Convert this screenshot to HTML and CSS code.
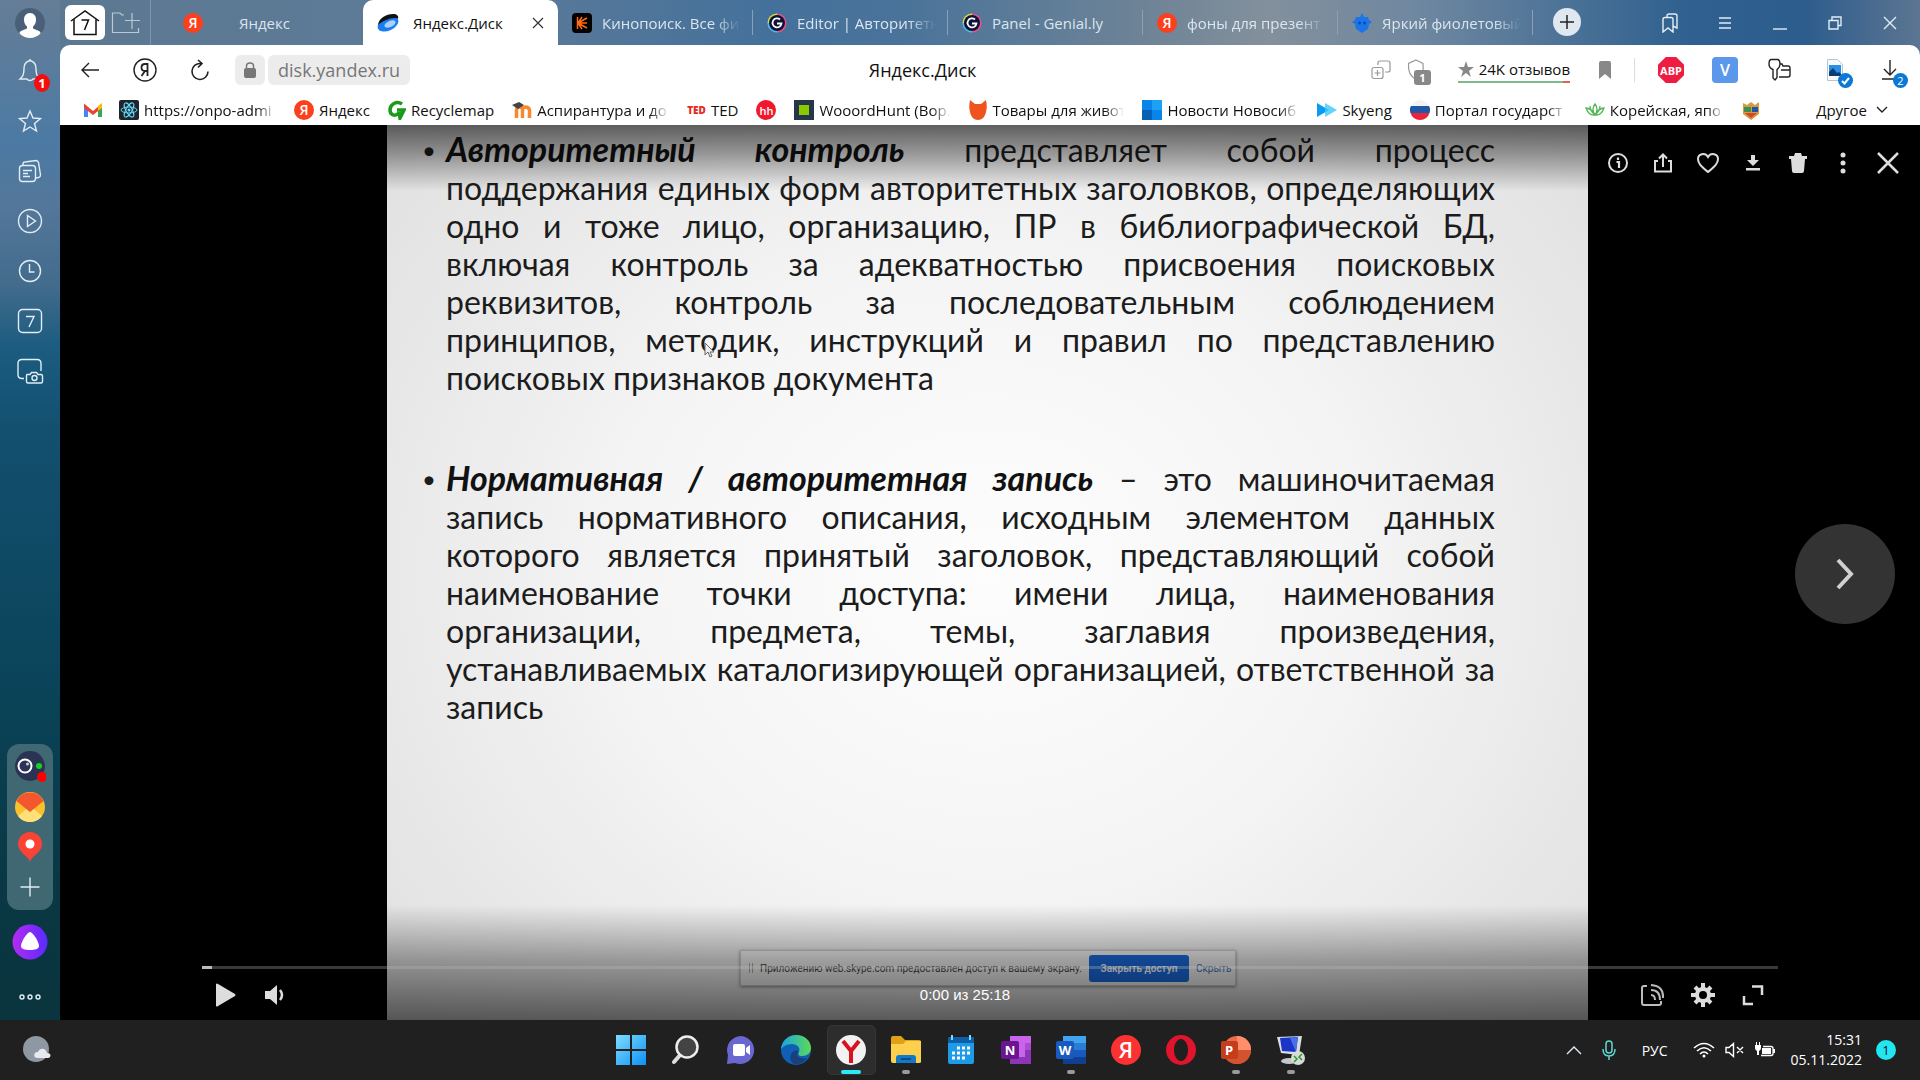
FILE: index.html
```html
<!DOCTYPE html>
<html lang="ru">
<head>
<meta charset="utf-8">
<title>Яндекс.Диск</title>
<link rel="stylesheet" href="styles.css">
</head>
<body>
<div class="browser">
  <aside class="sidebar">
    <button class="side-btn avatar" aria-label="Профиль"><svg width="30" height="30" viewBox="0 0 30 30"><circle cx="15" cy="15" r="15" fill="#4a6078"/><path d="M15 5c4 0 6 3 6 6.500 0 3-1 5.500-3 7v2l6 2.500c1 .5 1.500 1.500 1.500 2.500A15 15 0 0 1 15 30a15 15 0 0 1-10.500-4.500c0-1 .5-2 1.500-2.500l6-2.500v-2c-2-1.500-3-4-3-7C9 8 11 5 15 5z" fill="#fff"/></svg></button>
    <nav class="side-nav">
      <button class="side-btn" aria-label="Уведомления"><svg class="line" width="24" height="26" viewBox="0 0 24 26"><path d="M12 2.500c-4 1-6 4-6 8 0 6-1 8-4 10.500h7c1 2 5 2 6 0h7c-3-2.500-4-4.500-4-10.500 0-4-2-7-6-8zM12 1v2"/></svg><span class="badge red">1</span></button>
      <button class="side-btn" aria-label="Избранное"><svg class="line" width="24" height="24" viewBox="0 0 24 24"><path d="M12 2l3 7 7.500.5-6 5L18.500 22 12 18l-6.500 4 2-7.500-6-5L9 9z"/></svg></button>
      <button class="side-btn" aria-label="Коллекции"><svg class="line" width="24" height="24" viewBox="0 0 24 24"><rect x="1.500" y="6.500" width="16" height="16" rx="3"/><path d="M5 6V5q0-2 2-2l11-1.500q2 0 2.500 2L22.500 16q0 2-2 2.500l-3 .5M5 11.500h9M5 14.500h5M5 17.500h7"/></svg></button>
      <button class="side-btn" aria-label="Видео"><svg class="line" width="26" height="26" viewBox="0 0 26 26"><circle cx="13" cy="13" r="11.500"/><path d="M10.500 7.500v11l8-5.500z"/></svg></button>
      <button class="side-btn" aria-label="История"><svg class="line" width="24" height="24" viewBox="0 0 24 24"><circle cx="12" cy="12" r="10.500"/><path d="M11.500 5v8h5"/></svg></button>
      <button class="side-btn" aria-label="Вкладки"><svg class="line" width="26" height="26" viewBox="0 0 26 26"><rect x="1.500" y="1.500" width="23" height="23" rx="4"/><path d="M9 8.500h8l-5 10.500"/></svg></button>
      <button class="side-btn" aria-label="Скриншот"><svg class="line" width="28" height="26" viewBox="0 0 28 26"><path d="M8 20.500H6q-4 0-4-4V5.500q0-4 4-4h15q4 0 4 4V13M11 16.500h3l1.500-2h5l1.500 2h3q1.500 0 1.500 1.500v5.500q0 1.500-1.500 1.500H12q-1.500 0-1.500-1.500V18q0-1.500.5-1.500z"/><circle cx="18.500" cy="20" r="2.500"/></svg></button>
    </nav>
    <div class="side-apps">
      <button class="side-app" aria-label="Камера"><svg width="32" height="32" viewBox="0 0 32 32"><circle cx="16" cy="15" r="15" fill="#2b3355"/><circle cx="11" cy="15" r="6.500" fill="none" stroke="#fff" stroke-width="2"/><circle cx="13.500" cy="13" r="1.500" fill="#ccd"/><circle cx="25" cy="15" r="3" fill="#16d21c"/><circle cx="28" cy="26" r="5" fill="#f00"/></svg></button>
      <button class="side-app" aria-label="Почта"><svg width="30" height="30" viewBox="0 0 30 30"><circle cx="15" cy="15" r="15" fill="#fbc02e"/><path d="M3 24l12-10 12 10a15 15 0 0 1-24 0z" fill="#ffe07a"/><path d="M1.500 9a15 15 0 0 1 27 0L15 20z" fill="#f4572d"/></svg></button>
      <button class="side-app" aria-label="Карты"><svg width="26" height="32" viewBox="0 0 26 32"><path d="M13 31c-1-6-12-9-12-18a12 12 0 0 1 24 0c0 9-11 12-12 18z" fill="#fb4335"/><circle cx="13" cy="13" r="4.500" fill="#fff"/></svg></button>
      <button class="side-app" aria-label="Добавить"><svg class="line" width="20" height="20" viewBox="0 0 20 20"><path d="M10 .5v19M.5 10h19"/></svg></button>
    </div>
    <button class="side-btn alice" aria-label="Алиса"><svg width="36" height="36" viewBox="0 0 36 36"><defs><linearGradient id="al" x2="1"><stop stop-color="#b32bf2"/><stop offset="1" stop-color="#5a2bff"/></linearGradient></defs><circle cx="18" cy="18" r="17.500" fill="url(#al)"/><path d="M18 8c3 0 9 10 9 14 0 3-4 4-9 4s-9-1-9-4c0-4 6-14 9-14z" fill="#fff"/></svg></button>
    <button class="side-btn more" aria-label="Ещё"><svg class="line" width="24" height="8" viewBox="0 0 24 8"><circle cx="4" cy="4" r="2"/><circle cx="12" cy="4" r="2"/><circle cx="20" cy="4" r="2"/></svg></button>
  </aside>

  <main class="main">
    <header class="tabs">
      <div class="tab-tools">
        <button class="home" aria-label="Главная"><svg width="32" height="30" viewBox="0 0 32 30" fill="none" stroke="#111" stroke-width="1.500"><path d="M2 13L16 3l14 10M5 11v15.500h22V11"/><path d="M12.500 12h7l-4 10"/></svg></button>
        <button class="folder" aria-label="Группа вкладок"><svg width="30" height="24" viewBox="0 0 30 24" fill="none" stroke="#b9c9d8" stroke-width="1.200"><path d="M13 4H11L9 2H1.500v19.500h26V17M21 2v16M14 9.500h15"/></svg></button>
      </div>
      <button class="tab first"><span class="ya">Я</span><span class="tab-text">Яндекс</span></button>
      <div class="tab active"><svg width="22" height="18" viewBox="0 0 22 18"><ellipse cx="11" cy="10" rx="11" ry="6.500" transform="rotate(-25 11 10)" fill="#1a7cf0"/><path d="M1 11C2 4 9 0 16 0c4 0 6 2 5 5-1-2-8-1-12 1-3 1-6 3-8 5z" fill="#111"/><ellipse cx="13" cy="10" rx="6" ry="3" transform="rotate(-25 13 10)" fill="#a6d2ff"/></svg><span class="tab-text">Яндекс.Диск</span><button class="close" aria-label="Закрыть вкладку"><svg width="12" height="12" viewBox="0 0 12 12" stroke="#333" stroke-width="1.200"><path d="M1 1l10 10M11 1L1 11"/></svg></button></div>
      <button class="tab"><svg width="20" height="20" viewBox="0 0 20 20"><rect width="20" height="20" rx="4" fill="#000"/><path d="M5.500 4v12M6 10l9-5M6 10h9M6 10l9 5M6 10l4-6M6 10l4 6" stroke="#ff6a13" stroke-width="1.500"/></svg><span class="tab-text fade">Кинопоиск. Все фи</span></button>
      <button class="tab"><svg width="20" height="20" viewBox="0 0 20 20"><use href="#genially"/></svg><span class="tab-text fade">Editor | Авторитетн</span></button>
      <button class="tab"><svg width="20" height="20" viewBox="0 0 20 20"><use href="#genially"/></svg><span class="tab-text">Panel - Genial.ly</span></button>
      <button class="tab"><span class="ya">Я</span><span class="tab-text fade">фоны для презент</span></button>
      <button class="tab"><svg width="20" height="20" viewBox="0 0 20 20"><path d="M10 0l2 4h4l1 3 3 2-3 2-1 5-6 4-6-4-1-5-3-2 3-2 1-3h4z" fill="#1b74e8"/><circle cx="7.500" cy="10" r="1.500" fill="#0b4aa8"/><circle cx="12.500" cy="10" r="1.500" fill="#0b4aa8"/></svg><span class="tab-text fade">Яркий фиолетовый</span></button>
      <button class="new-tab" aria-label="Новая вкладка"><svg width="14" height="14" viewBox="0 0 14 14" stroke="#222" stroke-width="1.500"><path d="M7 0v14M0 7h14"/></svg></button>
      <div class="win">
        <button aria-label="Закладки"><svg class="line" width="20" height="20" viewBox="0 0 20 20"><path d="M3 6.500q0-2 2-2h6q2 0 2 2V19l-5-4-5 4zM7 4V3q0-2 2-2h6q2 0 2 2v12l-4-2"/></svg></button>
        <button aria-label="Меню"><svg class="line" width="14" height="12" viewBox="0 0 14 12"><path d="M1 1h12M1 6h12M1 11h12"/></svg></button>
        <button aria-label="Свернуть"><svg class="line" width="14" height="14" viewBox="0 0 14 14"><path d="M0 13h14"/></svg></button>
        <button aria-label="Развернуть"><svg class="line" width="14" height="14" viewBox="0 0 14 14"><path d="M1 4.500h9V13H1zM4 4.500V1h9v8.500h-3"/></svg></button>
        <button aria-label="Закрыть"><svg class="line" width="14" height="14" viewBox="0 0 14 14"><path d="M1 1l12 12M13 1L1 13"/></svg></button>
      </div>
    </header>

    <div class="chrome">
      <div class="toolbar">
        <div class="nav">
          <button aria-label="Назад"><svg class="ink" width="18" height="16" viewBox="0 0 18 16"><path d="M18 8H1M8 1L1 8l7 7"/></svg></button>
          <button aria-label="Яндекс"><svg class="ink" width="24" height="24" viewBox="0 0 24 24"><circle cx="12" cy="12" r="11"/><path d="M14.500 18V6h-2.500c-2.500 0-3.500 1.500-3.500 3.500S10 13 12 13h2.500M12 13l-3.500 5" stroke-width="1.800"/></svg></button>
          <button aria-label="Обновить"><svg class="ink" width="20" height="22" viewBox="0 0 20 22"><path d="M11 4.500a8 8 0 1 0 7 8M8 1l4 3.500L8 8.500" stroke-width="1.600"/></svg></button>
          <div class="address"><button class="lock" aria-label="Защищено"><svg width="12" height="16" viewBox="0 0 12 16"><rect y="6" width="12" height="10" rx="2" fill="#777"/><path d="M2.500 7V4q0-3 3.500-3t3.500 3v3" fill="none" stroke="#777" stroke-width="1.500"/></svg></button><button class="url">disk.yandex.ru</button></div>
        </div>
        <h1 class="page-title">Яндекс.Диск</h1>
        <div class="tools">
          <button class="t1" aria-label="Дублировать"><svg width="20" height="20" viewBox="0 0 20 20" fill="none" stroke="#999" stroke-width="1.200"><rect x="1" y="7.500" width="11" height="11" rx="2"/><path d="M7 5V3q0-2 2-2h8q2 0 2 2v7q0 2-2 2h-3M6.500 10v6M3.500 13h6"/></svg></button>
          <button class="t2" aria-label="Защита"><svg width="24" height="26" viewBox="0 0 24 26"><path d="M9 1l7 3.500c1 7-1 13-7 16C3 17.500 1 11.500 1.500 4.500z" fill="none" stroke="#999" stroke-width="1.200"/><rect x="7" y="11" width="17" height="15" rx="3" fill="#888"/></svg><span class="shield-count">1</span></button>
          <button class="reviews"><svg width="16" height="16" viewBox="0 0 16 16"><path d="M8 0l2 6h6l-5 4 2 6-5-4-5 4 2-6-5-4h6z" fill="#888"/></svg>24K отзывов</button>
          <button class="t3" aria-label="В закладки"><svg width="12" height="18" viewBox="0 0 12 18"><path d="M0 2q0-2 2-2h8q2 0 2 2v16l-6-5-6 5z" fill="#888"/></svg></button>
          <span class="divider"></span>
          <button class="ext abp">ABP</button>
          <button class="ext vbtn">V</button>
          <button class="ext" aria-label="Пароли"><svg class="ink" width="24" height="24" viewBox="0 0 24 24"><path d="M3 1.500h7q2 1 2 4.500t-3 5.500v8L7 22l-2-2v-8.500Q1 10 1 6t2-4.500zM12 6h2l1 2h5q2 0 2 2v7q0 2-2 2h-9M13 12h9"/></svg></button>
          <button class="ext" aria-label="Изображение"><svg width="16" height="22" viewBox="0 0 16 22"><path d="M.5.5h10l5 5v16H.5z" fill="#f7f9fb" stroke="#b9c4cf"/><rect x="2" y="6" width="12" height="11" fill="#2c8fe6"/><path d="M2 17v-4l4-4 4 5 2-1 2 2v2z" fill="#0a3b73"/></svg><span class="badge blue"><svg width="9" height="8" viewBox="0 0 9 8" fill="none" stroke="#fff" stroke-width="2"><path d="M1 4l2.500 2.500L8 1"/></svg></span></button>
          <button class="ext" aria-label="Загрузки"><svg class="ink" width="18" height="20" viewBox="0 0 18 20"><path d="M9 0v15M3 9l6 6 6-6M1 19h12"/></svg><span class="badge blue">2</span></button>
        </div>
      </div>
      <nav class="bookmarks">
        <a href="#" aria-label="Gmail" class="gm"><svg width="20" height="16" viewBox="0 0 20 16"><path d="M1 2v13h4V6z" fill="#4285f4"/><path d="M19 2v13h-4V6z" fill="#34a853"/><path d="M1 1.500L10 9l9-7.500V6l-9 7-9-7z" fill="#ea4335"/><path d="M15 4l4-3v5l-4 3z" fill="#fbbc04"/></svg></a>
        <a href="#"><svg width="20" height="20" viewBox="0 0 20 20"><rect width="20" height="20" rx="2" fill="#20232a"/><g fill="none" stroke="#61dafb"><ellipse cx="10" cy="10" rx="8" ry="3"/><ellipse cx="10" cy="10" rx="8" ry="3" transform="rotate(60 10 10)"/><ellipse cx="10" cy="10" rx="8" ry="3" transform="rotate(120 10 10)"/></g><circle cx="10" cy="10" r="1.500" fill="#61dafb"/></svg><span class="bm-long">https://onpo-admi</span></a>
        <a href="#"><span class="ya">Я</span><span>Яндекс</span></a>
        <a href="#"><svg width="18" height="20" viewBox="0 0 18 20"><path d="M14 4C8 0 2 5 2 10c0 5 5 7 9 3M9 10h7l-4 8-1-6" fill="none" stroke="#1a9a1a" stroke-width="3.500"/></svg><span>Recyclemap</span></a>
        <a href="#"><svg width="20" height="18" viewBox="0 0 20 18"><path d="M4.500 17V9q0-3 3-3t3 3v8M10.500 9q0-3 3-3t4 3v8" fill="none" stroke="#f7882f" stroke-width="3.500"/><path d="M0 4l7-3 5 3-6 4z" fill="#444"/></svg><span class="bm-long">Аспирантура и до</span></a>
        <a href="#"><b class="ted">TED</b><span>TED</span></a>
        <a href="#" class="hh">hh</a>
        <a href="#"><svg width="20" height="20" viewBox="0 0 20 20"><rect width="20" height="20" fill="#26364a"/><rect x="5" y="5" width="10" height="10" fill="#8cc800"/></svg><span class="bm-long">WooordHunt (Вор.</span></a>
        <a href="#"><svg width="18" height="20" viewBox="0 0 18 20"><path d="M1 0l5 4h6l5-4c1 5 1 8 0 12-1 5-4 8-8 8s-7-3-8-8C0 8 0 5 1 0z" fill="#f0541e"/></svg><span class="bm-long">Товары для живот</span></a>
        <a href="#"><svg width="20" height="20" viewBox="0 0 20 20"><path d="M0 0h20v20H0z" fill="#0a84e8"/><path d="M10 0h10v10H10z" fill="#1ba1f5"/><path d="M0 10h10v10H0z" fill="#0560b6"/></svg><span class="bm-long">Новости Новосиб</span></a>
        <a href="#"><svg width="20" height="14" viewBox="0 0 20 14"><path d="M0 0l12 7-12 7z" fill="#0a9cf5"/><path d="M8 0l12 7-12 7z" fill="#3cc8f8" opacity=".8"/></svg><span>Skyeng</span></a>
        <a href="#"><svg width="20" height="20" viewBox="0 0 20 20"><circle cx="10" cy="10" r="10" fill="#f2f2f2"/><path d="M1 6h18q2 3 .5 7H.5Q-1 9 1 6z" fill="#2257a8"/><path d="M.5 13h19a10 10 0 0 1-19 0z" fill="#e6263a"/></svg><span class="bm-long">Портал государст</span></a>
        <a href="#"><svg width="20" height="14" viewBox="0 0 20 14" fill="none" stroke="#53b454" stroke-width="1.300"><path d="M10 1q4 5 0 11Q6 6 10 1zM10 12Q4 13 1 5q5 0 9 7zM10 12q6 1 9-7-5 0-9 7zM10 12Q5 8 5 3M10 12q5-4 5-9"/></svg><span class="bm-mid">Корейская, япо</span></a>
        <a href="#" aria-label="Герб"><svg width="18" height="20" viewBox="0 0 18 20"><path d="M1 3l4 2 4-3 4 3 4-3v12l-8 6-8-6z" fill="#d79a3c"/><path d="M2 7h7v5H2z" fill="#3d8e50"/><path d="M10 7h6v5h-6z" fill="#2257a8"/><path d="M3 13h12l-6 5z" fill="#d6452f"/></svg></a>
        <button class="other">Другое<svg class="ink" width="12" height="8" viewBox="0 0 12 8"><path d="M1 1l5 5 5-5"/></svg></button>
      </nav>
    </div>

    <section class="viewer">
      <article class="slide">
        <ul class="points">
          <li>
            <span class="ln"><b>Авторитетный контроль</b> представляет собой процесс</span>
            <span class="ln">поддержания единых форм авторитетных заголовков, определяющих</span>
            <span class="ln">одно и тоже лицо, организацию, ПР в библиографической БД,</span>
            <span class="ln">включая контроль за адекватностью присвоения поисковых</span>
            <span class="ln">реквизитов, контроль за последовательным соблюдением</span>
            <span class="ln">принципов, методик, инструкций и правил по представлению</span>
            <span class="ln last">поисковых признаков документа</span>
          </li>
          <li>
            <span class="ln"><b>Нормативная / авторитетная запись</b> – это машиночитаемая</span>
            <span class="ln">запись нормативного описания, исходным элементом данных</span>
            <span class="ln">которого является принятый заголовок, представляющий собой</span>
            <span class="ln">наименование точки доступа: имени лица, наименования</span>
            <span class="ln">организации, предмета, темы, заглавия произведения,</span>
            <span class="ln">устанавливаемых каталогизирующей организацией, ответственной за</span>
            <span class="ln last">запись</span>
          </li>
        </ul>
        <div class="share"><span class="grip"></span><span class="share-text">Приложению web.skype.com предоставлен доступ к вашему экрану.</span><button class="stop">Закрыть доступ</button><a href="#">Скрыть</a></div>
        <svg class="cursor" width="10" height="16" viewBox="0 0 10 16"><path d="M1 1v12l3-3 2 5 2-1-2-4h4z" fill="#eee" stroke="#666"/></svg>
      </article>
      <div class="shade"></div>
      <div class="actions">
        <button aria-label="Информация"><svg width="22" height="22" viewBox="0 0 22 22"><circle cx="11" cy="11" r="9" fill="none" stroke="#ddd" stroke-width="2"/><path d="M9.500 10H12v6M11 5.500v2.500" fill="none" stroke="#ddd" stroke-width="2.200"/></svg></button>
        <button aria-label="Поделиться"><svg width="22" height="22" viewBox="0 0 22 22" fill="none" stroke="#ddd" stroke-width="2"><path d="M6 9H3v10.500h16V9h-3M11 15V3M7 6.500l4-4 4 4"/></svg></button>
        <button aria-label="Нравится"><svg width="24" height="22" viewBox="0 0 24 22" fill="none" stroke="#ddd" stroke-width="2"><path d="M12 20C6 15 2 12 2 7c0-5 7-7 10-2 3-5 10-3 10 2 0 5-4 8-10 13z"/></svg></button>
        <button aria-label="Скачать"><svg width="16" height="18" viewBox="0 0 16 18" fill="#ddd"><path d="M6 1h4v5h4l-6 6-6-6h4zM1 14h14v2.500H1z"/></svg></button>
        <button aria-label="Удалить"><svg width="20" height="22" viewBox="0 0 20 22" fill="#ddd"><path d="M1 4h5l1-3h6l1 3h5v3h-2l-1 12q0 2-2 2H6q-2 0-2-2L3 7H1z"/></svg></button>
        <button aria-label="Ещё"><svg width="6" height="22" viewBox="0 0 6 22" fill="#ddd"><circle cx="3" cy="3" r="2.500"/><circle cx="3" cy="11" r="2.500"/><circle cx="3" cy="19" r="2.500"/></svg></button>
        <button aria-label="Закрыть"><svg width="22" height="22" viewBox="0 0 22 22" stroke="#ddd" stroke-width="2.500"><path d="M1 1l20 20M21 1L1 21"/></svg></button>
      </div>
      <button class="next" aria-label="Следующий"><svg width="20" height="32" viewBox="0 0 20 32" fill="none" stroke="#d0d0d0" stroke-width="4"><path d="M3 2l13 14L3 30"/></svg></button>
      <div class="player">
        <div class="progress"><div class="played"></div></div>
        <div class="controls">
          <div class="left">
            <button aria-label="Играть"><svg width="20" height="24" viewBox="0 0 20 24"><path d="M0 1q1-1 2 0l17 10q1 1 0 2L2 23q-1 1-2 0z" fill="#ddd"/></svg></button>
            <button aria-label="Звук"><svg width="20" height="20" viewBox="0 0 20 20"><path d="M0 6h5l7-6v20l-7-6H0z" fill="#ddd"/><path d="M15 5q4 5 0 10" fill="none" stroke="#ddd" stroke-width="2.500"/></svg></button>
          </div>
          <time>0:00 из 25:18</time>
          <div class="right">
            <button aria-label="Трансляция"><svg width="24" height="24" viewBox="0 0 24 24" fill="none" stroke="#bbb" stroke-width="2"><path d="M7 3H4q-2 0-2 2v15q0 2 2 2h15q2 0 2-2v-2M11 12q4 0 4 5M11 7q9 0 9 10M11 2q13 1 12 13"/></svg></button>
            <button aria-label="Настройки"><svg width="24" height="24" viewBox="0 0 24 24" fill="none" stroke="#ddd"><circle cx="12" cy="12" r="6" stroke-width="4"/><g stroke-width="4"><path d="M12 0v5M12 19v5M0 12h5M19 12h5M4 4l3.500 3.500M16.500 16.500L20 20M20 4l-3.500 3.500M4 20l3.500-3.500"/></g></svg></button>
            <button aria-label="Во весь экран"><svg width="22" height="22" viewBox="0 0 22 22" fill="none" stroke="#ddd" stroke-width="2.500"><path d="M10 2.500h10V11M2 12v8h9"/></svg></button>
          </div>
        </div>
      </div>
    </section>
  </main>
</div>

<footer class="taskbar">
  <button class="weather" aria-label="Погода"><svg width="30" height="28" viewBox="0 0 30 28"><circle cx="14" cy="13" r="13" fill="#8e98a2"/><path d="M16 22c-6 0-4-7 0-6 2-5 8-4 9 1 5 0 4 5 1 5z" fill="#e6eaee"/></svg></button>
  <div class="apps">
    <button aria-label="Пуск"><svg width="30" height="30" viewBox="0 0 30 30"><defs><linearGradient id="wn" x2="1" y2="1"><stop stop-color="#7fdcff"/><stop offset="1" stop-color="#0c92f5"/></linearGradient></defs><path d="M0 0h14v14H0zM16 0h14v14H16zM0 16h14v14H0zM16 16h14v14H16z" fill="url(#wn)"/></svg></button>
    <button aria-label="Поиск"><svg width="28" height="30" viewBox="0 0 28 30"><path d="M9 19l-7 8" stroke="#ddd" stroke-width="4" stroke-linecap="round"/><circle cx="15" cy="12" r="10.500" fill="#444" stroke="#eee" stroke-width="2.500"/></svg></button>
    <button aria-label="Чат"><svg width="30" height="30" viewBox="0 0 30 30"><path d="M15 1a14 14 0 1 1-6 27l-8 1 1-9A14 14 0 0 1 15 1z" fill="#6a67d0"/><rect x="7" y="9" width="12" height="12" rx="2" fill="#fff"/><path d="M20 13l4-3v10l-4-3z" fill="#fff"/></svg></button>
    <button aria-label="Edge"><svg width="30" height="30" viewBox="0 0 30 30"><defs><linearGradient id="ed" x2="1"><stop stop-color="#18a5e0"/><stop offset="1" stop-color="#5fd957"/></linearGradient></defs><circle cx="15" cy="15" r="15" fill="#0f60b5"/><path d="M0 14C1 5 8 0 15 0c9 0 15 6 15 13 0 5-4 8-9 8-4 0-4-2-3-4 2-4-2-8-7-8-6 0-9 3-11 5z" fill="url(#ed)"/><path d="M17 17c-2 4 1 7 9 6-3 5-9 7-13 6-5-3-5-10 0-13 3-1 4-1 4 1z" fill="#1b3f7d"/></svg></button>
    <button class="current" aria-label="Яндекс Браузер"><svg width="30" height="30" viewBox="0 0 30 30"><circle cx="15" cy="15" r="15" fill="#f2f2f2"/><path d="M7 6l8 10 8-10M15 15v13" fill="none" stroke="#d8121f" stroke-width="4"/></svg></button>
    <button class="open" aria-label="Проводник"><svg width="30" height="28" viewBox="0 0 30 28"><path d="M0 2q0-2 2-2h8l4 4h14q2 0 2 2v8H0z" fill="#e0a018"/><path d="M0 8h12l3-3h15v21q0 1-2 1H2q-2 0-2-2z" fill="#fcd04c"/><path d="M5 27v-5q0-3 3-3h14q3 0 3 3v5z" fill="#1378c8"/><path d="M10 23h10" stroke="#0a4c8c" stroke-width="2"/></svg></button>
    <button aria-label="Календарь"><svg width="26" height="30" viewBox="0 0 26 30"><rect y="2" width="26" height="27" rx="2" fill="#1b9be8"/><path d="M0 4q0-2 2-2h22q2 0 2 2v4H0z" fill="#0d5fa8"/><path d="M4 0v5M22 0v5" stroke="#7fd8ff" stroke-width="2"/><path d="M9 13h14M4 18h19M4 23h14" stroke="#fff" stroke-width="3" stroke-dasharray="3 2"/></svg></button>
    <button aria-label="OneNote"><svg width="30" height="28" viewBox="0 0 30 28"><path d="M9 0h21v28H9z" fill="#ca64ea"/><path d="M24 7h6v7h-6z" fill="#ae4bd5"/><path d="M24 14h6v14H9v-7h15z" fill="#8d35b5"/><rect y="5" width="18" height="18" rx="2" fill="#6a1692"/><text x="9" y="19" class="glyph">N</text></svg></button>
    <button class="open" aria-label="Word"><svg width="30" height="28" viewBox="0 0 30 28"><path d="M7 0h23v28H7z" fill="#41a5ee"/><path d="M7 7h23v7H7z" fill="#2b7cd3"/><path d="M7 14h23v7H7z" fill="#185abd"/><path d="M7 21h23v7H7z" fill="#103f91"/><rect y="5" width="18" height="18" rx="2" fill="#185abd"/><text x="9" y="19" class="glyph">W</text></svg></button>
    <button aria-label="Яндекс"><svg width="30" height="30" viewBox="0 0 30 30"><circle cx="15" cy="15" r="15" fill="#fc3232"/><text x="15" y="23" class="glyph big">Я</text></svg></button>
    <button aria-label="Opera"><svg width="30" height="30" viewBox="0 0 30 30"><path fill-rule="evenodd" d="M15 0a15 15 0 1 0 0 30 15 15 0 0 0 0-30zm0 4c4 0 7 5 7 11s-3 11-7 11-7-5-7-11 3-11 7-11z" fill="#e0142c"/></svg></button>
    <button class="open" aria-label="PowerPoint"><svg width="30" height="30" viewBox="0 0 30 30"><circle cx="16" cy="15" r="14" fill="#ed6c47"/><path d="M16 1a14 14 0 0 1 14 14H16z" fill="#ff8f6b"/><path d="M2 15h28a14 14 0 0 1-28 0z" fill="#d35230"/><rect y="6" width="17" height="18" rx="2" fill="#c43e1c"/><text x="8" y="20" class="glyph">P</text></svg></button>
    <button class="open" aria-label="Удалённый рабочий стол"><svg width="30" height="30" viewBox="0 0 30 30"><path d="M1 2l25-1-3 19-18-2z" fill="#d8dde4"/><path d="M4 3l18-1-2 15-14-1z" fill="#1a35c8"/><path d="M14 3l8-1-2 15z" fill="#4a70e8"/><ellipse cx="13" cy="26" rx="8" ry="3" fill="#c4c8ce"/><circle cx="22" cy="23" r="7" fill="#d8dcd8"/><path d="M18 21l3 3-3 3M26 19l-3 3 3 3" fill="none" stroke="#2a9a2a" stroke-width="1.500"/></svg></button>
  </div>
  <div class="tray">
    <button class="up" aria-label="Скрытые значки"><svg class="line" width="16" height="10" viewBox="0 0 16 10"><path d="M1 9l7-7 7 7"/></svg></button>
    <button class="mic" aria-label="Микрофон"><svg width="14" height="20" viewBox="0 0 14 20" fill="none" stroke="#5fd6d0" stroke-width="1.500"><rect x="4" y="1" width="6" height="12" rx="3"/><path d="M1 9q0 7 6 7t6-7M7 16v4"/></svg></button>
    <button class="lang">РУС</button>
    <button class="status" aria-label="Сеть, звук, батарея">
      <svg width="22" height="16" viewBox="0 0 22 16" fill="none" stroke="#fff" stroke-width="1.600"><path d="M1 6q10-9 20 0M4 9q7-6.500 14 0M7 12q4-4 8 0"/><circle cx="11" cy="14" r="1.500" fill="#fff" stroke="none"/></svg>
      <svg width="20" height="16" viewBox="0 0 20 16" fill="none" stroke="#fff" stroke-width="1.400"><path d="M1 5.500h3l4.500-4v13l-4.500-4H1zM12 5l6 6M18 5l-6 6"/></svg>
      <svg width="20" height="16" viewBox="0 0 20 16"><path d="M8 4.500h8q2 0 2 2v5q0 2-2 2H6" fill="none" stroke="#fff" stroke-width="1.300"/><rect x="7" y="6" width="9" height="6" fill="#fff"/><path d="M18 7h2v4h-2zM0 3h6v3q0 2-2 3v4H2V9Q0 8 0 6zM1 0h1v3H1zM4 0h1v3H4z" fill="#fff"/></svg>
    </button>
    <button class="clock"><span>15:31</span><span>05.11.2022</span></button>
    <span class="count">1</span>
  </div>
</footer>

<svg class="defs" width="0" height="0"><symbol id="genially" viewBox="0 0 20 20"><circle cx="10" cy="10" r="9.500" fill="#f0518c"/><path d="M10 .5a9.500 9.500 0 0 0-9.500 9.500H10z" fill="#c9e24a"/><path d="M.5 10a9.500 9.500 0 0 0 9.500 9.500V10z" fill="#3fc3f0"/><circle cx="10" cy="10" r="8" fill="#0e1238"/><path d="M13 6.500a4.500 4.500 0 1 0 1.500 4H10" fill="none" stroke="#fff" stroke-width="1.800"/></symbol></svg>
</body>
</html>
```
FILE: styles.css
```css
* { box-sizing: border-box; }
body {
  margin: 0;
  height: 100vh;
  display: flex;
  flex-direction: column;
  overflow: hidden;
  font-family: "Open Sans", "Noto Sans", sans-serif;
  font-size: 14px;
  color: #111;
}
button {
  border: 0;
  padding: 0;
  background: none;
  font: inherit;
  color: inherit;
  display: flex;
  align-items: center;
  justify-content: center;
}
a { color: inherit; text-decoration: none; }
svg { display: block; flex: none; }
.line { fill: none; stroke: #e2edf5; stroke-width: 1.4; }
.ink { fill: none; stroke: #222; stroke-width: 1.4; }
.defs { position: absolute; }

.browser {
  flex: 1;
  min-height: 0;
  display: flex;
  background: linear-gradient(90deg, #5c7890 0, #5d7a98 25%, #44719b 40%, #4a739a 47%, #6f8496 60%, #83909c 66%, #6e87a0 74%, #2f608f 88%, #2d5d8c 94%, #5c7592 100%);
}

/* Side panel */
.sidebar {
  width: 60px;
  flex: none;
  display: flex;
  flex-direction: column;
  align-items: center;
  background: linear-gradient(#667d96 0, #5b7c9c 6%, #4b7aa4 14%, #54779a 20%, #426b8c 28%, #1b5c80 34%, #135070 42%, #0a4358 68%, #093844 86%, #0a343e 100%);
}
.side-btn { position: relative; width: 48px; height: 50px; flex: none; }
.avatar { height: 46px; }
.side-apps {
  margin-top: auto;
  width: 46px;
  padding: 3px 0;
  border-radius: 12px;
  background: #3f6873;
  display: flex;
  flex-direction: column;
  align-items: center;
}
.side-app { width: 46px; height: 40px; }
.alice { height: 64px; }
.more { height: 46px; }
.badge {
  position: absolute;
  display: flex;
  align-items: center;
  justify-content: center;
  border-radius: 50%;
  color: #fff;
  font-size: 11px;
  line-height: 1;
}
.badge.red { width: 16px; height: 18px; right: 4px; bottom: 4px; background: #f60d0d; font-weight: 700; font-size: 13px; }
.badge.blue { width: 15px; height: 15px; background: #0a78d4; }

/* Tabs */
.main { flex: 1; min-width: 0; display: flex; flex-direction: column; }
.tabs { height: 45px; flex: none; display: flex; align-items: stretch; }
.tab-tools { width: 91px; flex: none; display: flex; align-items: center; padding: 0 0 0 5px; gap: 6px; border-right: 1px solid #7d94aa; }
.home { width: 40px; height: 35px; border-radius: 6px; background: #fff; }
.tab {
  flex: 0 1 195px;
  min-width: 0;
  display: flex;
  align-items: center;
  justify-content: flex-start;
  gap: 10px;
  padding: 0 12px 0 14px;
  color: #dbe5ee;
  font-size: 15px;
  position: relative;
}
.tab + .tab:not(.active)::after {
  content: "";
  position: absolute;
  right: 0;
  top: 10px;
  height: 25px;
  border-right: 1px solid #8ba0b3;
}
.tab.first { flex-basis: 212px; padding-left: 32px; gap: 36px; }
.tab.active { background: #fff; color: #111; border-radius: 10px 10px 0 0; gap: 14px; }
.close { margin-left: auto; width: 16px; height: 16px; }
.tab-text { white-space: nowrap; overflow: hidden; }
.fade { flex: 1; text-align: left; -webkit-mask-image: linear-gradient(90deg, #000 80%, transparent); mask-image: linear-gradient(90deg, #000 80%, transparent); }
.ya {
  width: 20px;
  height: 20px;
  flex: none;
  border-radius: 50%;
  background: #fc3f1d;
  color: #fff;
  font-size: 14px;
  font-weight: 600;
  line-height: 20px;
  text-align: center;
}
.new-tab { width: 28px; height: 28px; margin: 8px 0 0 20px; border-radius: 50%; background: #dfe7ef; flex: none; }
.win { margin-left: auto; padding-right: 3px; display: flex; }
.win button { width: 55px; }

/* Address bar and bookmarks */
.chrome { background: #fff; border-radius: 10px 10px 0 0; flex: none; }
.toolbar { height: 50px; display: grid; grid-template-columns: 6fr auto 7fr; align-items: center; }
.nav { display: flex; align-items: center; padding-left: 2px; }
.nav > button { width: 55px; height: 40px; }
.address { display: flex; gap: 3px; margin-left: 8px; }
.address button { height: 30px; border-radius: 6px; background: #ececec; }
.lock { width: 30px; }
.address .url { padding: 0 10px; font-size: 18px; color: #777; }
.page-title { margin: 0; font-size: 18px; font-weight: 400; }
.tools { display: flex; align-items: center; justify-content: flex-end; padding-right: 3px; }
.tools button { height: 40px; }
.t1 { width: 38px; }
.t2 { width: 38px; position: relative; }
.t2 svg { margin-top: 4px; }
.shield-count { position: absolute; right: 12px; bottom: 5px; color: #fff; font-size: 11px; line-height: 15px; font-weight: 700; }
.tools .reviews {
  height: 26px;
  margin: 0 20px 0 20px;
  gap: 5px;
  font-size: 15px;
  white-space: nowrap;
  border-bottom: 2px solid;
  border-image: linear-gradient(90deg, #7fb98a 93%, #e0605a 93%) 1;
}
.t3 { width: 30px; }
.divider { width: 1px; height: 24px; margin: 0 23px 0 14px; background: #ddd; }
.ext { width: 55px; position: relative; }
.ext .badge { right: 9px; bottom: 2px; }
.tools .abp, .tools .vbtn { width: 26px; height: 26px; margin-right: 14px; color: #fff; font-weight: 700; }
.tools .abp { background: #ed1c40; font-size: 11px; clip-path: polygon(30% 0, 70% 0, 100% 30%, 100% 70%, 70% 100%, 30% 100%, 0 70%, 0 30%); }
.tools .vbtn { margin-left: 14px; background: #5b97ea; border-radius: 4px; font-size: 16px; font-weight: 600; }
.bookmarks { height: 30px; display: flex; align-items: center; gap: 18px; padding: 0 32px 0 23px; font-size: 15px; }
.bookmarks a { display: flex; align-items: center; gap: 5px; white-space: nowrap; flex: none; }
.bm-long, .bm-mid { width: 132px; overflow: hidden; -webkit-mask-image: linear-gradient(90deg, #000 85%, transparent); mask-image: linear-gradient(90deg, #000 85%, transparent); }
.bm-mid { width: 114px; }
.gm { margin-right: -2px; }
.ted { color: #e62b1e; font-size: 10px; font-weight: 800; }
.bookmarks .hh { width: 20px; height: 20px; border-radius: 50%; background: #f1182c; color: #fff; font-size: 11px; font-weight: 600; justify-content: center; }
.other { margin-left: auto; gap: 9px; }

/* Video viewer */
.viewer { flex: 1; min-height: 0; position: relative; background: #000; display: flex; justify-content: center; padding-right: 5px; }
.slide {
  position: relative;
  width: 1201px;
  background: radial-gradient(ellipse 65% 75% at 50% 50%, #fdfdfd 0, #f5f5f5 45%, #e0e0e0 100%);
}
.points { margin: 0; padding: 6px 93px 0 59px; list-style: none; font-family: Lato, "Open Sans", sans-serif; font-size: 32px; line-height: 38px; color: #1c1c1c; }
.points li { position: relative; margin-bottom: 63px; }
.points li::before { content: "•"; position: absolute; left: -24px; font-size: 24px; }
.points b { font-style: italic; font-size: 34px; line-height: 1; color: #111; }
.ln { display: block; height: 38px; white-space: nowrap; text-align: justify; text-align-last: justify; }
.last { text-align-last: left; }
.share {
  position: absolute;
  left: 353px;
  bottom: 34px;
  width: 496px;
  height: 36px;
  padding: 0 8px;
  display: flex;
  align-items: center;
  gap: 7px;
  background: #f4f4f4;
  border: 1px solid #ccc;
  box-shadow: 0 1px 3px #888;
  font-family: Roboto, "Open Sans", sans-serif;
  font-size: 10px;
  color: #444;
  white-space: nowrap;
}
.grip { width: 4px; height: 10px; border: solid #aaa; border-width: 0 1px; flex: none; }
.stop { margin-left: auto; width: 100px; height: 27px; flex: none; border-radius: 3px; background: #1b6be0; color: #fff; font-weight: 600; }
.share a { color: #3a6fb5; }
.cursor { position: absolute; left: 317px; top: 217px; }
.shade { position: absolute; inset: 0; background: linear-gradient(rgba(0,0,0,.6) 0, rgba(0,0,0,.35) 30px, rgba(0,0,0,0) 66px, transparent calc(100% - 115px), rgba(0,0,0,.35) calc(100% - 60px), rgba(0,0,0,.62) 100%); }
.actions { position: absolute; right: 10px; top: 15px; display: flex; }
.actions button { width: 45px; height: 45px; }
.next { position: absolute; right: 25px; top: calc(50% + 1px); margin-top: -50px; width: 100px; height: 100px; border-radius: 50%; background: #333; }
.player { position: absolute; left: 142px; right: 142px; bottom: 0; }
.progress { height: 3px; background: rgba(190,190,190,.3); }
.played { width: 10px; height: 3px; background: #bbb; }
.controls { height: 51px; display: grid; grid-template-columns: 1fr auto 1fr; align-items: center; color: #fff; }
.controls time { font-family: "Liberation Sans", Arial, sans-serif; font-size: 15px; padding-right: 50px; }
.left, .right { display: flex; align-items: center; }
.left { padding-left: 14px; gap: 29px; }
.right { justify-content: flex-end; padding-right: 14px; gap: 27px; }

/* Taskbar */
.taskbar { height: 60px; flex: none; display: grid; grid-template-columns: 1fr auto 1fr; align-items: center; background: #202020; color: #fff; }
.weather { margin-left: 22px; justify-self: start; }
.apps { display: flex; padding-left: 2px; }
.apps button { width: 55px; height: 60px; position: relative; }
.apps .current::before { content: ""; position: absolute; inset: 5px 3px; border-radius: 5px; background: #2d2d2d; border: 1px solid #353535; }
.current svg { position: relative; }
.open::after, .current::after { content: ""; position: absolute; bottom: 6px; width: 8px; height: 4px; border-radius: 2px; background: #9a9a9a; }
.apps .current::after { width: 20px; background: #2ceaf5; }
.glyph { font: 700 13px "Open Sans", sans-serif; fill: #fff; text-anchor: middle; }
.glyph.big { font-size: 22px; font-weight: 600; }
.tray { display: flex; align-items: center; justify-content: flex-end; padding-right: 24px; }
.up { width: 36px; }
.mic { width: 34px; }
.lang { width: 58px; }
.status { gap: 10px; margin: 0 16px 0 9px; }
.clock { flex-direction: column; align-items: flex-end; line-height: 20px; }
.count { margin-left: 14px; width: 20px; height: 20px; border-radius: 50%; background: #22e6f2; color: #111; line-height: 20px; text-align: center; font-size: 13px; }
```
